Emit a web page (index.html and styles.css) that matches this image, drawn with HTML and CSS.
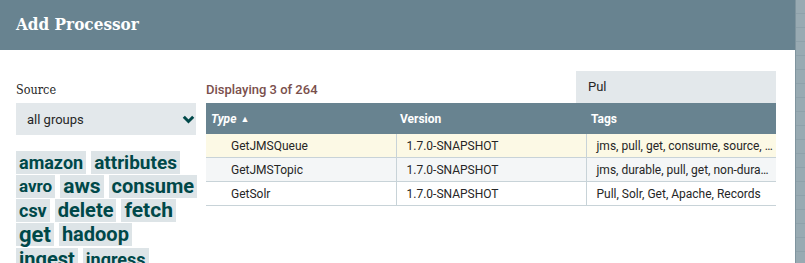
FILE: index.html
```html
<!DOCTYPE html>
<html lang="en">
<head>
    <meta charset="UTF-8">
    <title>Add Processor</title>
    <link rel="stylesheet" href="styles.css">
</head>
<body>
    <div class="page">
        <div class="dialog">
            <div class="dialog-header">Add Processor</div>
            <div class="dialog-body">
                <div class="side">
                    <div class="side-label">Source</div>
                    <div class="select">
                        <span>all groups</span>
                        <svg class="chevron" width="13" height="9" viewBox="0 0 13 9">
                            <polyline points="1.8,1.8 6.5,6.5 11.2,1.8" fill="none" stroke="#004849" stroke-width="3"/>
                        </svg>
                    </div>
                    <div class="tag-cloud">
                        <span class="tag t18">amazon</span>
                        <span class="tag t19">attributes</span>
                        <span class="tag t17">avro</span>
                        <span class="tag t21">aws</span>
                        <span class="tag t20">consume</span>
                        <span class="tag t18">csv</span>
                        <span class="tag t20">delete</span>
                        <span class="tag t21">fetch</span>
                        <span class="tag t23">get</span>
                        <span class="tag t20">hadoop</span>
                        <span class="tag-break"></span>
                        <span class="tag t20">ingest</span>
                        <span class="tag t18">ingress</span>
                    </div>
                </div>
                <div class="main">
                    <div class="toolbar">
                        <div class="count">Displaying 3 of 264</div>
                        <div class="filter">Pul</div>
                    </div>
                    <table class="grid">
                        <colgroup>
                            <col class="col-type">
                            <col class="col-version">
                            <col class="col-tags">
                        </colgroup>
                        <thead>
                            <tr>
                                <th class="sorted">Type <span class="arrow">&#9650;</span></th>
                                <th>Version</th>
                                <th class="th-tags">Tags</th>
                            </tr>
                        </thead>
                        <tbody>
                            <tr class="selected">
                                <td class="type">GetJMSQueue</td>
                                <td>1.7.0-SNAPSHOT</td>
                                <td>jms, pull, get, consume, source, subscribe</td>
                            </tr>
                            <tr class="odd">
                                <td class="type">GetJMSTopic</td>
                                <td>1.7.0-SNAPSHOT</td>
                                <td>jms, durable, pull, get, non-durable, subscribe</td>
                            </tr>
                            <tr>
                                <td class="type">GetSolr</td>
                                <td>1.7.0-SNAPSHOT</td>
                                <td>Pull, Solr, Get, Apache, Records</td>
                            </tr>
                        </tbody>
                    </table>
                </div>
            </div>
        </div>
        <div class="canvas-edge"></div>
    </div>
</body>
</html>
```
FILE: styles.css
```css
body {
    margin: 0;
    font-family: Roboto, "Liberation Sans", sans-serif;
    color: #262626;
    overflow: hidden;
}
.page {
    display: flex;
    width: 805px;
    height: 263px;
}
.dialog {
    flex: 1;
    background: #fff;
    overflow: hidden;
}
.dialog-header {
    height: 50px;
    line-height: 48px;
    padding-left: 16px;
    background-color: #688390;
    color: #fff;
    font-family: "DejaVu Serif Condensed", "DejaVu Serif", serif;
    font-weight: bold;
    font-size: 17px;
}
.dialog-body {
    display: flex;
    gap: 10px;
    padding: 0 20px 0 16px;
}
.side {
    width: 180px;
    padding-top: 31px;
}
.side-label {
    font-family: "DejaVu Serif Condensed", "DejaVu Serif", serif;
    font-size: 12.5px;
    line-height: 18px;
    margin-bottom: 4px;
}
.select {
    display: flex;
    justify-content: space-between;
    align-items: center;
    height: 32px;
    padding: 0 1px 0 11px;
    background: #e3e8eb;
    font-size: 13px;
}
.tag-cloud {
    display: flex;
    flex-wrap: wrap;
    align-items: flex-start;
    gap: 1px 5px;
    width: 190px;
    margin-top: 16px;
}
.tag {
    padding: 0 3px;
    height: 23px;
    line-height: 23px;
    background: #dde4e7;
    color: #004849;
    font-weight: bold;
}
.tag-break {
    flex-basis: 100%;
    height: 0;
    margin-top: -1px;
}
.t17 { font-size: 17px; }
.t18 { font-size: 18px; }
.t19 { font-size: 19px; }
.t20 { font-size: 20px; }
.t21 { font-size: 21px; }
.t23 { font-size: 22px; }
.main {
    width: 570px;
    padding-top: 21px;
}
.toolbar {
    display: flex;
    justify-content: space-between;
    align-items: flex-end;
}
.count {
    color: #7a4f4c;
    font-size: 13px;
    font-weight: 500;
    padding-bottom: 6px;
}
.filter {
    width: 188px;
    height: 32px;
    line-height: 32px;
    padding-left: 12px;
    background: #e3e8eb;
    font-size: 13px;
}
.grid {
    width: 570px;
    border-collapse: collapse;
    table-layout: fixed;
    font-size: 12px;
}
.col-type,
.col-version,
.col-tags {
    width: 190px;
}
.grid th {
    height: 31px;
    padding: 0 0 0 4px;
    background: #688390;
    color: #fff;
    text-align: left;
    font-weight: bold;
}
.grid th.sorted {
    font-style: italic;
    padding-left: 5px;
}
.grid th.th-tags {
    padding-left: 5px;
}
.arrow {
    font-size: 9px;
    font-style: normal;
    vertical-align: 1px;
    margin-left: 1px;
}
.grid td {
    height: 23px;
    padding: 0 2px 0 10px;
    border-bottom: 1px solid #c8d3d8;
    border-left: 1px solid #c8d3d8;
    white-space: nowrap;
    overflow: hidden;
    text-overflow: ellipsis;
}
.grid td.type {
    border-left: none;
    padding-left: 25px;
}
.grid tr.selected td {
    background: #fcf9e5;
}
.grid tr.odd td {
    background: #f4f6f7;
}
.canvas-edge {
    width: 9px;
    border-left: 1px solid #7f949e;
    background-color: #98aab2;
    background-image: repeating-linear-gradient(to bottom, transparent 0, transparent 13px, #8ea1aa 13px, #8ea1aa 14px);
}
```
